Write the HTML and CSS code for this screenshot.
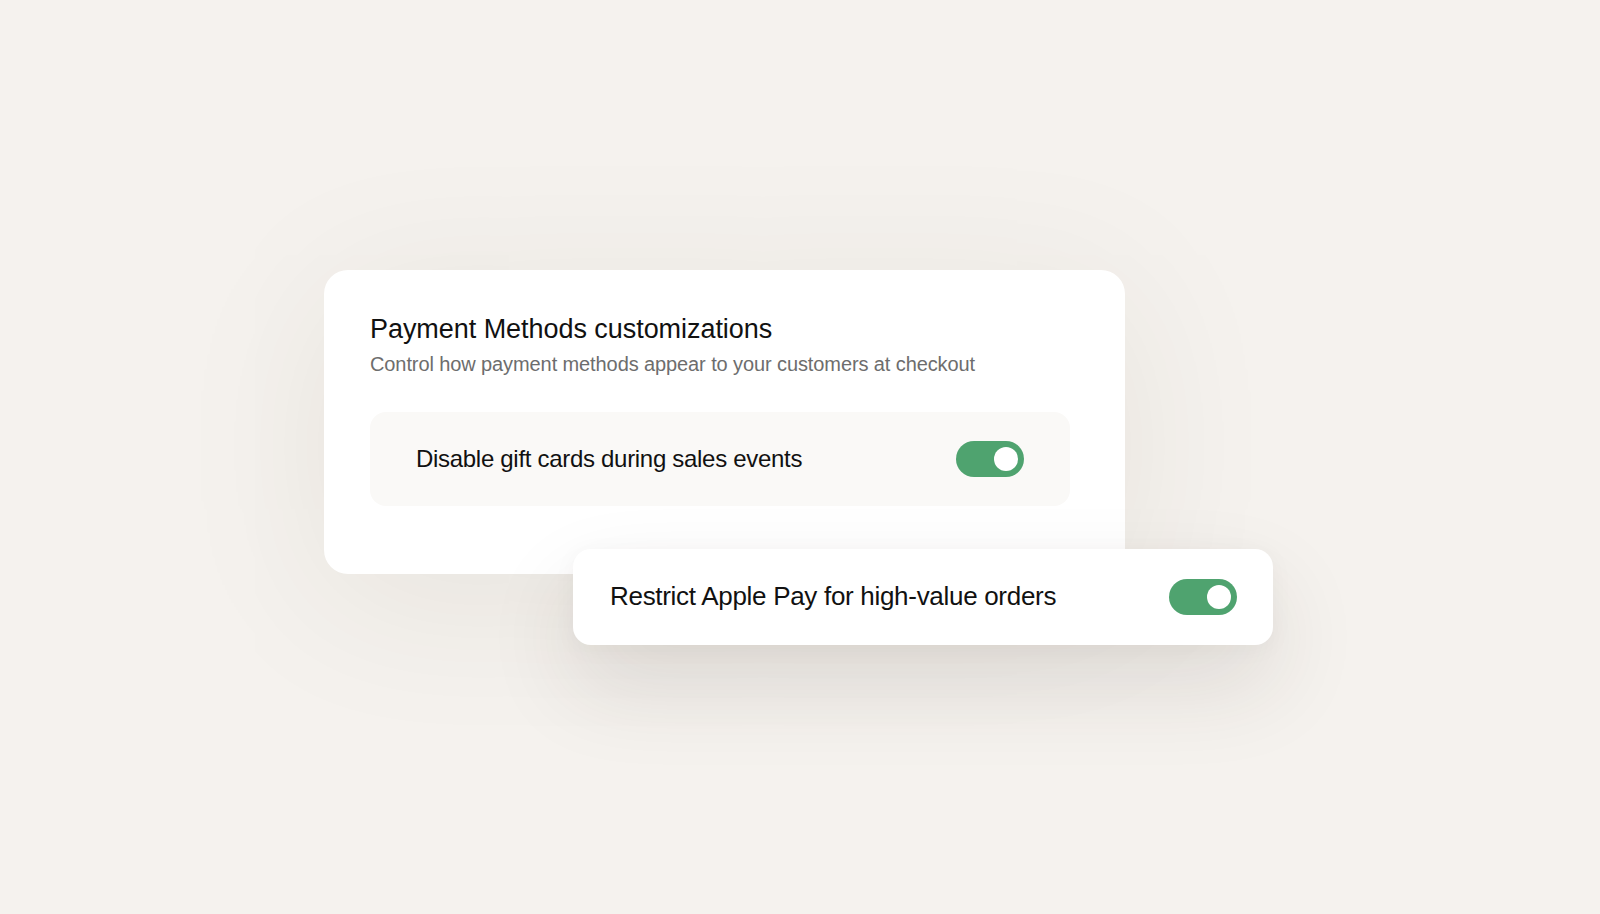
FILE: index.html
```html
<!DOCTYPE html>
<html lang="en">
<head>
<meta charset="utf-8">
<title>Payment Methods customizations</title>
<link rel="stylesheet" href="styles.css">
</head>
<body>
<main class="page">
  <div class="stage">
    <section class="panel">
      <h1 class="panel-title">Payment Methods customizations</h1>
      <p class="panel-sub">Control how payment methods appear to your customers at checkout</p>
      <div class="setting-row">
        <span class="setting-label">Disable gift cards during sales events</span>
        <span class="toggle is-on" role="switch" aria-checked="true"><span class="knob"></span></span>
      </div>
    </section>
    <div class="float-card">
      <span class="float-label">Restrict Apple Pay for high-value orders</span>
      <span class="toggle is-on" role="switch" aria-checked="true"><span class="knob"></span></span>
    </div>
  </div>
</main>
</body>
</html>
```
FILE: styles.css
```css
* { box-sizing: border-box; }

html, body {
  margin: 0;
  height: 100%;
}

body {
  background: #f5f2ee;
  font-family: "Liberation Sans", Arial, sans-serif;
  color: #111111;
}

.page {
  height: 100vh;
  display: flex;
  align-items: center;
  justify-content: center;
}

.stage {
  position: relative;
  padding: 0 151px 71px 0;
}

.panel {
  width: 801px;
  height: 304px;
  background: #ffffff;
  border-radius: 24px;
  padding: 43px 55px 0 46px;
  box-shadow: 0 24px 160px rgba(70, 50, 30, 0.08);
}

.panel-title {
  margin: 0;
  font-size: 27px;
  line-height: 32px;
  font-weight: 400;
  letter-spacing: -0.05px;
  color: #111111;
}

.panel-sub {
  margin: 6px 0 0;
  font-size: 20px;
  line-height: 26px;
  letter-spacing: -0.1px;
  color: #6d6d6d;
}

.setting-row {
  margin-top: 35px;
  width: 700px;
  height: 94px;
  background: #faf9f7;
  border-radius: 16px;
  padding: 0 46px;
  display: flex;
  align-items: center;
  justify-content: space-between;
}

.setting-label {
  font-size: 24px;
  letter-spacing: -0.3px;
  color: #111111;
}

.float-card {
  position: absolute;
  left: 249px;
  top: 279px;
  width: 700px;
  height: 96px;
  background: #ffffff;
  border-radius: 18px;
  padding: 0 36px 0 37px;
  display: flex;
  align-items: center;
  justify-content: space-between;
  box-shadow: 0 40px 90px rgba(60, 45, 30, 0.12), 0 4px 24px rgba(60, 45, 30, 0.04);
}

.float-label {
  font-size: 26px;
  letter-spacing: -0.3px;
  color: #111111;
}

.toggle {
  width: 68px;
  height: 36px;
  border-radius: 18px;
  background: #d6d3cf;
  display: flex;
  align-items: center;
  padding: 0 6px;
  flex-shrink: 0;
}

.toggle.is-on {
  background: #4fa36f;
  justify-content: flex-end;
}

.knob {
  width: 24px;
  height: 24px;
  border-radius: 50%;
  background: #ffffff;
}
```
